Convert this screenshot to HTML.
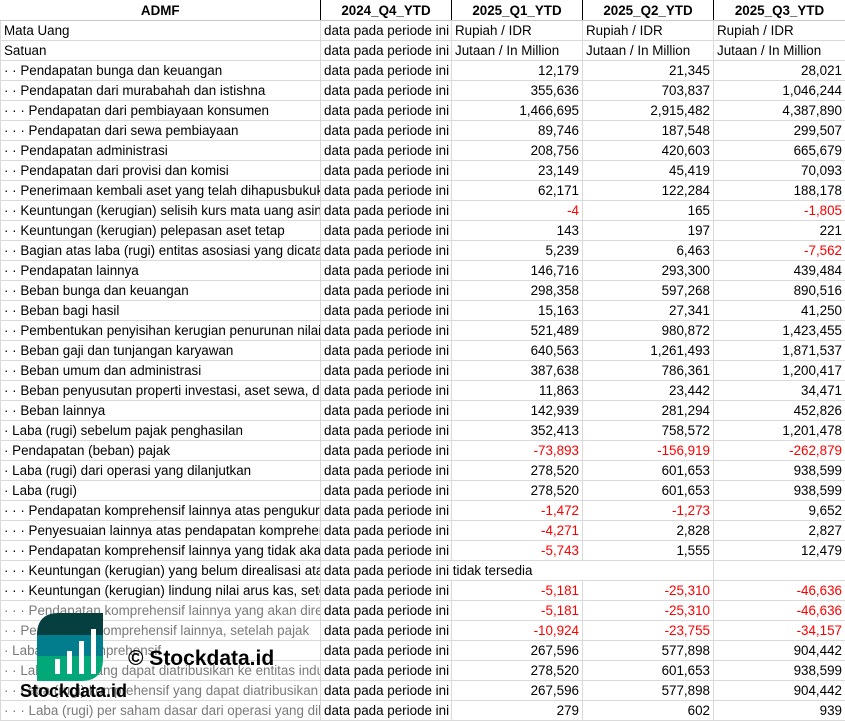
<!DOCTYPE html>
<html><head><meta charset="utf-8"><style>
body{margin:0;width:845px;height:721px;overflow:hidden;background:#fff;font-family:"Liberation Sans",sans-serif;font-size:13.4px;color:#000;position:relative}
table{border-collapse:collapse;table-layout:fixed;position:absolute;left:0;top:0;width:845px}
td{height:19px;padding:0 3px;border:1px solid #dadada;white-space:nowrap;overflow:hidden;line-height:19px;max-width:0}
th{height:20px;border-left:1px solid #000;border-right:1px solid #000;border-bottom:1px solid #c8c8c8;font-weight:bold;text-align:center;padding:0;font-size:13.4px;overflow:hidden}
th:first-child{border-left:none}
td.n{text-align:right}
.r{color:#f00}
.g td:first-child{color:#7a7a7a}
</style></head><body>
<table>
<colgroup><col style="width:320px"><col style="width:131px"><col style="width:131px"><col style="width:131px"><col style="width:132px"></colgroup>
<tr><th>ADMF</th><th>2024_Q4_YTD</th><th>2025_Q1_YTD</th><th>2025_Q2_YTD</th><th>2025_Q3_YTD</th></tr>
<tr><td>Mata Uang</td><td>data pada periode ini</td><td>Rupiah / IDR</td><td>Rupiah / IDR</td><td>Rupiah / IDR</td></tr>
<tr><td>Satuan</td><td>data pada periode ini</td><td>Jutaan / In Million</td><td>Jutaan / In Million</td><td>Jutaan / In Million</td></tr>
<tr><td>· · Pendapatan bunga dan keuangan</td><td>data pada periode ini</td><td class="n">12,179</td><td class="n">21,345</td><td class="n">28,021</td></tr>
<tr><td>· · Pendapatan dari murabahah dan istishna</td><td>data pada periode ini</td><td class="n">355,636</td><td class="n">703,837</td><td class="n">1,046,244</td></tr>
<tr><td>· · · Pendapatan dari pembiayaan konsumen</td><td>data pada periode ini</td><td class="n">1,466,695</td><td class="n">2,915,482</td><td class="n">4,387,890</td></tr>
<tr><td>· · · Pendapatan dari sewa pembiayaan</td><td>data pada periode ini</td><td class="n">89,746</td><td class="n">187,548</td><td class="n">299,507</td></tr>
<tr><td>· · Pendapatan administrasi</td><td>data pada periode ini</td><td class="n">208,756</td><td class="n">420,603</td><td class="n">665,679</td></tr>
<tr><td>· · Pendapatan dari provisi dan komisi</td><td>data pada periode ini</td><td class="n">23,149</td><td class="n">45,419</td><td class="n">70,093</td></tr>
<tr><td>· · Penerimaan kembali aset yang telah dihapusbukukan</td><td>data pada periode ini</td><td class="n">62,171</td><td class="n">122,284</td><td class="n">188,178</td></tr>
<tr><td>· · Keuntungan (kerugian) selisih kurs mata uang asing</td><td>data pada periode ini</td><td class="n r">-4</td><td class="n">165</td><td class="n r">-1,805</td></tr>
<tr><td>· · Keuntungan (kerugian) pelepasan aset tetap</td><td>data pada periode ini</td><td class="n">143</td><td class="n">197</td><td class="n">221</td></tr>
<tr><td>· · Bagian atas laba (rugi) entitas asosiasi yang dicatat</td><td>data pada periode ini</td><td class="n">5,239</td><td class="n">6,463</td><td class="n r">-7,562</td></tr>
<tr><td>· · Pendapatan lainnya</td><td>data pada periode ini</td><td class="n">146,716</td><td class="n">293,300</td><td class="n">439,484</td></tr>
<tr><td>· · Beban bunga dan keuangan</td><td>data pada periode ini</td><td class="n">298,358</td><td class="n">597,268</td><td class="n">890,516</td></tr>
<tr><td>· · Beban bagi hasil</td><td>data pada periode ini</td><td class="n">15,163</td><td class="n">27,341</td><td class="n">41,250</td></tr>
<tr><td>· · Pembentukan penyisihan kerugian penurunan nilai</td><td>data pada periode ini</td><td class="n">521,489</td><td class="n">980,872</td><td class="n">1,423,455</td></tr>
<tr><td>· · Beban gaji dan tunjangan karyawan</td><td>data pada periode ini</td><td class="n">640,563</td><td class="n">1,261,493</td><td class="n">1,871,537</td></tr>
<tr><td>· · Beban umum dan administrasi</td><td>data pada periode ini</td><td class="n">387,638</td><td class="n">786,361</td><td class="n">1,200,417</td></tr>
<tr><td>· · Beban penyusutan properti investasi, aset sewa, dan</td><td>data pada periode ini</td><td class="n">11,863</td><td class="n">23,442</td><td class="n">34,471</td></tr>
<tr><td>· · Beban lainnya</td><td>data pada periode ini</td><td class="n">142,939</td><td class="n">281,294</td><td class="n">452,826</td></tr>
<tr><td>· Laba (rugi) sebelum pajak penghasilan</td><td>data pada periode ini</td><td class="n">352,413</td><td class="n">758,572</td><td class="n">1,201,478</td></tr>
<tr><td>· Pendapatan (beban) pajak</td><td>data pada periode ini</td><td class="n r">-73,893</td><td class="n r">-156,919</td><td class="n r">-262,879</td></tr>
<tr><td>· Laba (rugi) dari operasi yang dilanjutkan</td><td>data pada periode ini</td><td class="n">278,520</td><td class="n">601,653</td><td class="n">938,599</td></tr>
<tr><td>· Laba (rugi)</td><td>data pada periode ini</td><td class="n">278,520</td><td class="n">601,653</td><td class="n">938,599</td></tr>
<tr><td>· · · Pendapatan komprehensif lainnya atas pengukuran</td><td>data pada periode ini</td><td class="n r">-1,472</td><td class="n r">-1,273</td><td class="n">9,652</td></tr>
<tr><td>· · · Penyesuaian lainnya atas pendapatan komprehensif</td><td>data pada periode ini</td><td class="n r">-4,271</td><td class="n">2,828</td><td class="n">2,827</td></tr>
<tr><td>· · · Pendapatan komprehensif lainnya yang tidak akan</td><td>data pada periode ini</td><td class="n r">-5,743</td><td class="n">1,555</td><td class="n">12,479</td></tr>
<tr><td>· · · Keuntungan (kerugian) yang belum direalisasi atas</td><td colspan="2" style="border-right-color:transparent">data pada periode ini tidak tersedia</td><td></td><td></td></tr>
<tr><td>· · · Keuntungan (kerugian) lindung nilai arus kas, setelah</td><td>data pada periode ini</td><td class="n r">-5,181</td><td class="n r">-25,310</td><td class="n r">-46,636</td></tr>
<tr class="g"><td>· · · Pendapatan komprehensif lainnya yang akan direklasifikasi</td><td>data pada periode ini</td><td class="n r">-5,181</td><td class="n r">-25,310</td><td class="n r">-46,636</td></tr>
<tr class="g"><td>· · Pendapatan komprehensif lainnya, setelah pajak</td><td>data pada periode ini</td><td class="n r">-10,924</td><td class="n r">-23,755</td><td class="n r">-34,157</td></tr>
<tr class="g"><td>· Laba (rugi) komprehensif</td><td>data pada periode ini</td><td class="n">267,596</td><td class="n">577,898</td><td class="n">904,442</td></tr>
<tr class="g"><td>· · Laba (rugi) yang dapat diatribusikan ke entitas induk</td><td>data pada periode ini</td><td class="n">278,520</td><td class="n">601,653</td><td class="n">938,599</td></tr>
<tr class="g"><td>· · Laba (rugi) komprehensif yang dapat diatribusikan</td><td>data pada periode ini</td><td class="n">267,596</td><td class="n">577,898</td><td class="n">904,442</td></tr>
<tr class="g"><td>· · · Laba (rugi) per saham dasar dari operasi yang dilanjutkan</td><td>data pada periode ini</td><td class="n">279</td><td class="n">602</td><td class="n">939</td></tr>
</table>
<svg style="position:absolute;left:37px;top:613px" width="66" height="68" viewBox="0 0 66 68">
<defs><clipPath id="c"><path d="M22 0H66V46Q66 68 44 68H0V22Q0 0 22 0Z"/></clipPath></defs>
<g clip-path="url(#c)">
<rect x="0" y="0" width="66" height="22" fill="#053f3f"/>
<rect x="0" y="22" width="66" height="21" fill="#027d8e"/>
<rect x="0" y="43" width="66" height="25" fill="#03a878"/>
</g>
<rect x="18" y="46" width="5" height="15" fill="#fff"/>
<rect x="30" y="38" width="5" height="23" fill="#fff"/>
<rect x="42" y="28" width="5" height="33" fill="#fff"/>
<rect x="54" y="16" width="5" height="45" fill="#fff"/>
</svg>
<div style="position:absolute;left:128px;top:647px;font-size:21px;font-weight:bold;color:#000">© Stockdata.id</div>
<div style="position:absolute;left:20px;top:681px;font-size:18px;font-weight:bold;color:#000">Stockdata.id</div>
</body></html>
